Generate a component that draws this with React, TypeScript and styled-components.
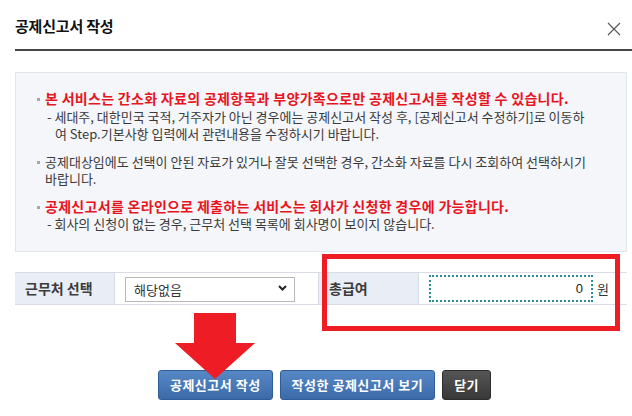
import styled, { createGlobalStyle } from "styled-components";

const GlobalStyle = createGlobalStyle`
    html, body {
        margin: 0;
        padding: 0;
        background: #ffffff;
    }
    body {
        font-family: "Noto Sans CJK KR", "Noto Sans", "Liberation Sans", sans-serif;
        color: #333;
    }
`

const SDialog = styled.div`
    position: relative;
    width: 632px;
    height: 416px;
    overflow: hidden;
    background: #fff;
`

const SHeader = styled.div`
    display: flex;
    align-items: center;
    justify-content: space-between;
    height: 49px;
    margin-left: 15px;
    padding-right: 10px;
    border-bottom: 2px solid #454545;
`

const STitle = styled.h1`
    margin: 0;
    padding-top: 2px;
    font-size: 15px;
    font-weight: 700;
    color: #111;
    letter-spacing: -0.2px;
`

const SClose = styled.button`
    width: 16px;
    height: 16px;
    padding: 0;
    border: 0;
    background: transparent;
    cursor: pointer;
    margin-top: 10px;
`

const SNotice = styled.div`
    margin: 21px 5px 0 15px;
    padding: 17px 0 18px 20px;
    background: #f4f6fa;
    border: 1px solid #e1e6ee;
    line-height: 17.5px;
`

const SItem = styled.div`
    position: relative;
    padding-left: 9px;
    & + & {
        margin-top: 10px;
    }
    &::before {
        content: "";
        position: absolute;
        left: 1px;
        top: 8px;
        width: 3px;
        height: 3px;
        background: #a8a8a8;
    }
`

const SLine = styled.div<{ $strong?: boolean; $indent?: number }>`
    white-space: nowrap;
    padding-left: ${p => p.$indent ?? 0}px;
    color: ${p => (p.$strong ? "#e8141e" : "#3a3a3a")};
    font-weight: ${p => (p.$strong ? 700 : 400)};
    font-size: ${p => (p.$strong ? "14px" : "13px")};
    letter-spacing: ${p => (p.$strong ? "0.3px" : "0")};
`

const SFormRow = styled.div`
    display: grid;
    grid-template-columns: 100px 203px 101px 1fr;
    height: 31px;
    margin: 20px 5px 0 15px;
    border-top: 1px solid #d7dce5;
    border-bottom: 1px solid #d7dce5;
`

const SLabel = styled.div<{ $edge?: boolean }>`
    display: flex;
    align-items: center;
    padding-left: 10px;
    background: #e9edf5;
    font-size: 14px;
    font-weight: 700;
    color: #3c3c3c;
    border-left: ${p => (p.$edge ? "1px solid #d7dce5" : "0")};
    border-right: 1px solid #d7dce5;
`

const SCell = styled.div`
    display: flex;
    align-items: center;
    padding-left: 10px;
    gap: 4px;
`

const SSelectWrap = styled.div`
    position: relative;
    width: 170px;
    height: 25px;
    svg {
        position: absolute;
        right: 8px;
        top: 9px;
        pointer-events: none;
    }
`

const SSelect = styled.select`
    width: 100%;
    height: 100%;
    padding: 0 8px;
    appearance: none;
    border: 1px solid #b8b8b8;
    background: #fff;
    font-family: inherit;
    font-size: 13px;
    color: #333;
`

const SInput = styled.input`
    box-sizing: border-box;
    width: 164px;
    height: 27px;
    padding: 0 8px;
    border: 2px dotted #2b8e96;
    outline: none;
    text-align: right;
    font-family: "Liberation Sans", sans-serif;
    font-size: 13px;
    color: #222;
`

const SUnit = styled.span`
    font-size: 13px;
    color: #333;
`

const SButtons = styled.div`
    display: flex;
    justify-content: center;
    gap: 7px;
    margin-top: 65px;
    padding-left: 17px;
`

const SButton = styled.button<{ $dark?: boolean }>`
    height: 30px;
    padding: 0 11px;
    border-radius: 3px;
    border: 1px solid ${p => (p.$dark ? "#2c2c2c" : "#2f5d98")};
    background: ${p =>
        p.$dark
            ? "linear-gradient(#555, #383838)"
            : "linear-gradient(#5788c6, #3c6aa9)"};
    color: #fff;
    font-family: inherit;
    font-size: 13px;
    font-weight: 700;
    letter-spacing: 0.5px;
`

const SHighlight = styled.div`
    position: absolute;
    left: 322px;
    top: 254px;
    width: 288px;
    height: 67px;
    border: 5px solid #ee1c25;
`

const SArrow = styled.svg`
    position: absolute;
    left: 174px;
    top: 312px;
`

export default function App() {
    return (
        <SDialog>
            <GlobalStyle />
            <SHeader>
                <STitle>공제신고서 작성</STitle>
                <SClose aria-label="닫기">
                    <svg width="14" height="14" viewBox="0 0 14 14">
                        <path d="M1 1 L13 13 M13 1 L1 13" stroke="#555" strokeWidth="1.1" />
                    </svg>
                </SClose>
            </SHeader>

            <SNotice>
                <SItem>
                    <SLine $strong>본 서비스는 간소화 자료의 공제항목과 부양가족으로만 공제신고서를 작성할 수 있습니다.</SLine>
                    <SLine $indent={2}>- 세대주, 대한민국 국적, 거주자가 아닌 경우에는 공제신고서 작성 후, [공제신고서 수정하기]로 이동하</SLine>
                    <SLine $indent={10}>여 Step.기본사항 입력에서 관련내용을 수정하시기 바랍니다.</SLine>
                </SItem>
                <SItem>
                    <SLine>공제대상임에도 선택이 안된 자료가 있거나 잘못 선택한 경우, 간소화 자료를 다시 조회하여 선택하시기</SLine>
                    <SLine>바랍니다.</SLine>
                </SItem>
                <SItem>
                    <SLine $strong>공제신고서를 온라인으로 제출하는 서비스는 회사가 신청한 경우에 가능합니다.</SLine>
                    <SLine $indent={2}>- 회사의 신청이 없는 경우, 근무처 선택 목록에 회사명이 보이지 않습니다.</SLine>
                </SItem>
            </SNotice>

            <SFormRow>
                <SLabel>근무처 선택</SLabel>
                <SCell>
                    <SSelectWrap>
                        <SSelect defaultValue="none">
                            <option value="none">해당없음</option>
                        </SSelect>
                        <svg width="9" height="6" viewBox="0 0 9 6">
                            <path d="M1 1 L4.5 4.5 L8 1" fill="none" stroke="#222" strokeWidth="2" />
                        </svg>
                    </SSelectWrap>
                </SCell>
                <SLabel $edge>총급여</SLabel>
                <SCell>
                    <SInput defaultValue="0" />
                    <SUnit>원</SUnit>
                </SCell>
            </SFormRow>

            <SButtons>
                <SButton>공제신고서 작성</SButton>
                <SButton>작성한 공제신고서 보기</SButton>
                <SButton $dark>닫기</SButton>
            </SButtons>

            <SHighlight />
            <SArrow width="82" height="68" viewBox="0 0 82 68">
                <path d="M20 1 L62 1 L62 31 L81 31 L41 67 L1 31 L20 31 Z" fill="#ee1c25" />
            </SArrow>
        </SDialog>
    );
}
